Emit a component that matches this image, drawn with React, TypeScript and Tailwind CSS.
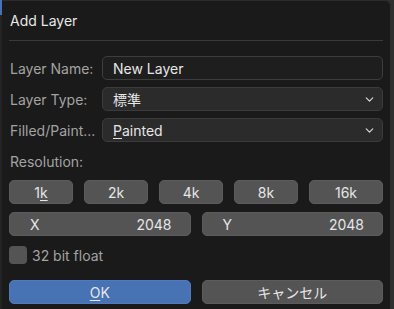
import { ChevronDown } from "lucide-react";

const FONT = { fontFamily: 'Inter, "Noto Sans CJK JP", sans-serif' };

function Row({ label, children }: { label: string; children: React.ReactNode }) {
  return (
    <div className="flex items-center h-[24px]">
      <div className="w-[93px] pl-[1px] text-[14px] text-[#a3a3a3] whitespace-nowrap">{label}</div>
      <div className="flex-1 h-full">{children}</div>
    </div>
  );
}

function Select({ children }: { children: React.ReactNode }) {
  return (
    <div className="h-full flex items-center justify-between pl-[10px] pr-[6px] bg-[#2b2b2b] border border-[#3b3b3b] rounded-[5px] text-[14px] text-[#e6e6e6]">
      <span>{children}</span>
      <ChevronDown size={13} strokeWidth={2.2} className="text-[#d8d8d8]" />
    </div>
  );
}

function Btn({ children, className = "" }: { children: React.ReactNode; className?: string }) {
  return (
    <div
      className={
        "h-[24px] flex items-center justify-center bg-[#545454] border border-[#5c5c5c] rounded-[5px] text-[14px] text-[#e6e6e6] " +
        className
      }
    >
      {children}
    </div>
  );
}

function NumField({ axis, value }: { axis: string; value: string }) {
  return (
    <div className="flex-1 h-[24px] flex items-center justify-between pl-[20px] pr-[18px] bg-[#545454] border border-[#5c5c5c] rounded-[5px] text-[14px] text-[#e6e6e6]">
      <span>{axis}</span>
      <span>{value}</span>
    </div>
  );
}

export default function App() {
  return (
    <div className="w-[394px] h-[309px] bg-[#2f2f2f] flex overflow-hidden" style={FONT}>
      <div className="w-[2px] flex flex-col">
        <div className="h-[15px] bg-[#4772b3]" />
        <div className="flex-1 bg-[#242424]" />
      </div>
      <div className="w-[389px] h-full bg-[#1a1a1a] rounded-tr-[6px] border-t border-r border-[#2c2c2c] px-[7px]">
        <div className="h-[39px] flex items-center pl-[1px] text-[14px] text-[#e8e8e8]">Add Layer</div>
        <div className="border-t border-[#3a3a3a]" />
        <div className="mt-[15px] flex flex-col gap-[7px]">
          <Row label="Layer Name:">
            <div className="h-full flex items-center pl-[10px] bg-[#1e1e1e] border border-[#3d3d3d] rounded-[5px] text-[14px] text-[#e6e6e6]">
              New Layer
            </div>
          </Row>
          <Row label="Layer Type:">
            <Select>標準</Select>
          </Row>
          <Row label="Filled/Paint...">
            <Select>
              <span className="underline underline-offset-2">P</span>ainted
            </Select>
          </Row>
        </div>
        <div className="h-[38px] flex items-center pl-[1px] text-[14px] text-[#a3a3a3]">Resolution:</div>
        <div className="flex gap-[11px]">
          <Btn className="w-[64px]">
            1<span className="underline underline-offset-2">k</span>
          </Btn>
          <Btn className="w-[64px]">2k</Btn>
          <Btn className="w-[64px]">4k</Btn>
          <Btn className="w-[64px]">8k</Btn>
          <Btn className="flex-1">16k</Btn>
        </div>
        <div className="flex gap-[11px] mt-[8px]">
          <NumField axis="X" value="2048" />
          <NumField axis="Y" value="2048" />
        </div>
        <div className="flex items-center gap-[5px] mt-[10px] h-[18px]">
          <div className="w-[18px] h-[18px] bg-[#545454] rounded-[4px]" />
          <span className="text-[14px] text-[#a3a3a3]">32 bit float</span>
        </div>
        <div className="flex gap-[11px] mt-[16px]">
          <Btn className="flex-1 !bg-[#4772b3] !border-[#4f7bbd]">
            <span className="underline underline-offset-2">O</span>K
          </Btn>
          <Btn className="flex-1">キャンセル</Btn>
        </div>
      </div>
    </div>
  );
}
